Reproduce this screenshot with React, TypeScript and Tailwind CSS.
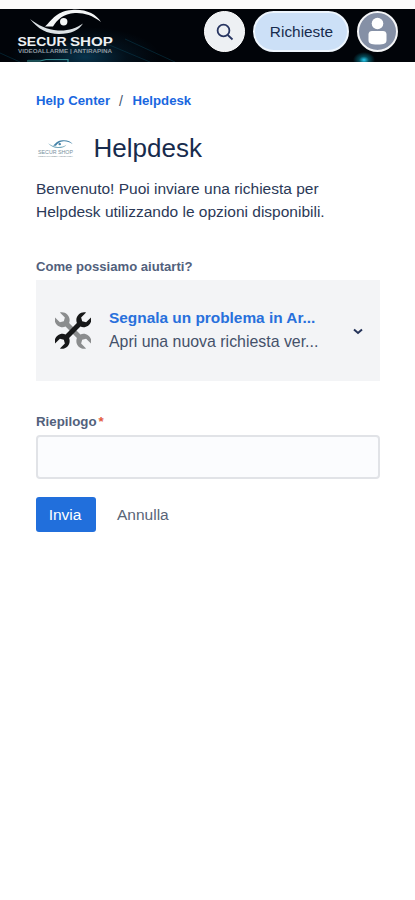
import React from "react";

function EyeMark({ className, main, accent }: { className: string; main: string; accent: string }) {
  return (
    <svg className={className} viewBox="0 0 72 28" preserveAspectRatio="none">
      <path d="M0 10C8 20 17 25 29 25C41 25 49 21 53 14.500C46 19.500 38 22 28 21.500C17 21 8 16 0 10Z" fill={accent} />
      <path d="M15 17.500C20 14 25 2 42 1C56 0 66 5 71 13C62 6 53 3.500 45 4C33 5 28 10 23 17.500Z" fill={main} />
      <circle cx="33.700" cy="12.800" r="3.700" fill={main} />
    </svg>
  );
}

function Header() {
  return (
    <header
      className="relative mt-[9px] flex h-[53px] items-start overflow-hidden bg-[#010409] pr-[17px] pl-[17px] font-['Liberation_Sans',sans-serif]"
    >
      <div className="absolute inset-0 bg-[radial-gradient(ellipse_75px_30px_at_85px_48px,#08334c_0%,#04182699_55%,transparent_100%)]" />
      <svg className="absolute inset-0" width="415" height="53" fill="none">
        <path d="M28 51H68V53M0 44L20 53M95 30L150 53M125 30L175 53" stroke="#0d4e63" strokeWidth="1" opacity=".4" />
        <path d="M27 52H40L46 50.500H68V53" stroke="#41a6a7" strokeWidth="1.200" opacity=".8" />
      </svg>
      <div className="absolute bottom-[-6px] left-[353px] h-[16px] w-[22px] bg-[radial-gradient(closest-side,#27cdf2,#08758999_45%,transparent)]" />
      <div className="relative flex w-[97px] flex-col items-center">
        <EyeMark className="h-[28px] w-[72px]" main="#f4f6f7" accent="#dce2e5" />
        <svg width="97" height="20" className="-mt-px block overflow-visible">
          <g fill="#edf0f2" fontSize="12" fontWeight="700">
            <text x="0.500" y="10" textLength="49" lengthAdjust="spacingAndGlyphs">SECUR</text>
            <text x="53" y="10" textLength="43" lengthAdjust="spacingAndGlyphs">SHOP</text>
          </g>
          <text x="1" y="16.500" textLength="94" lengthAdjust="spacingAndGlyphs" fill="#909aa2" fontSize="5.500" fontWeight="700">VIDEOALLARME | ANTIRAPINA</text>
        </svg>
      </div>
      <div className="relative mt-[2px] ml-auto flex gap-2">
        <button className="flex size-[41px] items-center justify-center rounded-full border border-white bg-[#edf0f3]">
          <svg width="18" height="18" viewBox="0 0 18 18" fill="none" stroke="#273561" strokeWidth="1.800">
            <circle cx="7.500" cy="7.500" r="5.900" />
            <path d="M11.700 12L16.500 16.500" />
          </svg>
        </button>
        <button className="h-[41px] w-[96px] rounded-full border-2 border-[#edf5fd] bg-[#cce0f7] pl-px text-[15.4px] text-[#172b4d]">Richieste</button>
        <div className="flex size-[41px] items-center justify-center rounded-full border-2 border-[#f4f5f7] bg-[#8590a6]">
          <svg width="37" height="37" viewBox="0 0 37 37" fill="white">
            <circle cx="18.500" cy="10.500" r="5.800" />
            <path d="M9.500 21.500C9.500 19 11 18 13 18H24C26 18 27.500 19 27.500 21.500V27C27.500 30.500 25.500 31.500 18.500 31.500S9.500 30.500 9.500 27Z" />
          </svg>
        </div>
      </div>
    </header>
  );
}

function WrenchShape({ fill }: { fill: string }) {
  return (
    <path
      fill={fill}
      d="M-3.500 -22C-8.500 -19.500 -9 -11 -2.500 -8V8C-9 11 -8.500 19.500 -3.500 22V15L0 13L3.500 15V22C8.500 19.500 9 11 2.500 8V-8C9 -11 8.500 -19.500 3.500 -22V-15L0 -13L-3.500 -15Z"
    />
  );
}

function Wrenches() {
  return (
    <svg className="shrink-0" width="36" height="37" viewBox="0 0 36 37">
      <g transform="translate(18 18.500) rotate(-45)"><WrenchShape fill="#8b8d8e" /></g>
      <g transform="translate(18 18.500) rotate(45)"><WrenchShape fill="#171819" /></g>
    </svg>
  );
}

export default function App() {
  return (
    <div className="h-[900px] overflow-hidden bg-white font-['Liberation_Sans',Arial,sans-serif] text-[#172b4d]">
      <div className="flow-root bg-[#fbfbfb]">
        <Header />
      </div>
      <main className="px-9">
        <nav className="flex pt-[31px] text-[13.2px] leading-4">
          <a className="w-[83px] font-bold text-[#1967df]">Help Center</a>
          <span className="w-[13.5px] text-[14px] text-[#44546f]">/</span>
          <a className="font-bold text-[#1967df]">Helpdesk</a>
        </nav>
        <div className="mt-[23px] flex h-8 items-center">
          <div className="w-[57.5px] pt-[2px] pl-[2px]">
            <EyeMark className="ml-[10px] h-[9px] w-[25px]" main="#4382a8" accent="#75a8bc" />
            <svg className="block overflow-visible" width="36" height="10">
              <text x="0" y="5" textLength="35" lengthAdjust="spacingAndGlyphs" fill="#78909d" fontSize="5.500">SECUR SHOP</text>
              <text x="0" y="8" textLength="35" lengthAdjust="spacingAndGlyphs" fill="#8797a0" fontSize="2.500" fontWeight="700">VIDEOALLARME | ANTIRAPINA</text>
            </svg>
          </div>
          <h1 className="text-[26px] leading-8">Helpdesk</h1>
        </div>
        <p className="mt-[13px] text-[15.5px] leading-[23px] whitespace-nowrap text-[#2b3957]">
          Benvenuto! Puoi inviare una richiesta per<br />Helpdesk utilizzando le opzioni disponibili.
        </p>
        <div className="mt-[36px] text-[13.1px] leading-4 font-bold text-[#52617c]">Come possiamo aiutarti?</div>
        <button className="mt-[5px] flex h-[101px] w-[344px] items-center bg-[#f3f4f6] pl-[19px] text-left">
          <Wrenches />
          <div className="ml-[18px] w-[220px] pb-px whitespace-nowrap">
            <div className="text-[15.4px] leading-6 font-bold text-[#2870dc]">Segnala un problema in Ar...</div>
            <div className="text-[15.9px] leading-6 text-[#44516a]">Apri una nuova richiesta ver...</div>
          </div>
          <svg className="mt-px ml-[24px]" width="10" height="7" viewBox="0 0 10 7" fill="none" stroke="#25345a" strokeWidth="2"><path d="M1 1.500L5 5L9 1.500" /></svg>
        </button>
        <label className="mt-[33px] flex text-[13.3px] leading-4 font-bold text-[#52617c]">
          Riepilogo<span className="ml-[2px] text-[#e35a40]">*</span>
        </label>
        <input aria-label="Riepilogo" className="mt-[5px] block h-[44px] w-[344px] rounded-[4px] border-2 border-[#e1e3e7] bg-[#fbfcfe]" />
        <div className="mt-[18px] flex items-center text-[15.5px]">
          <button className="h-[35px] w-[60px] rounded-[3px] bg-[#216fdc] pr-[2px] text-white">Invia</button>
          <button className="ml-[21px] text-[#596477]">Annulla</button>
        </div>
      </main>
    </div>
  );
}
